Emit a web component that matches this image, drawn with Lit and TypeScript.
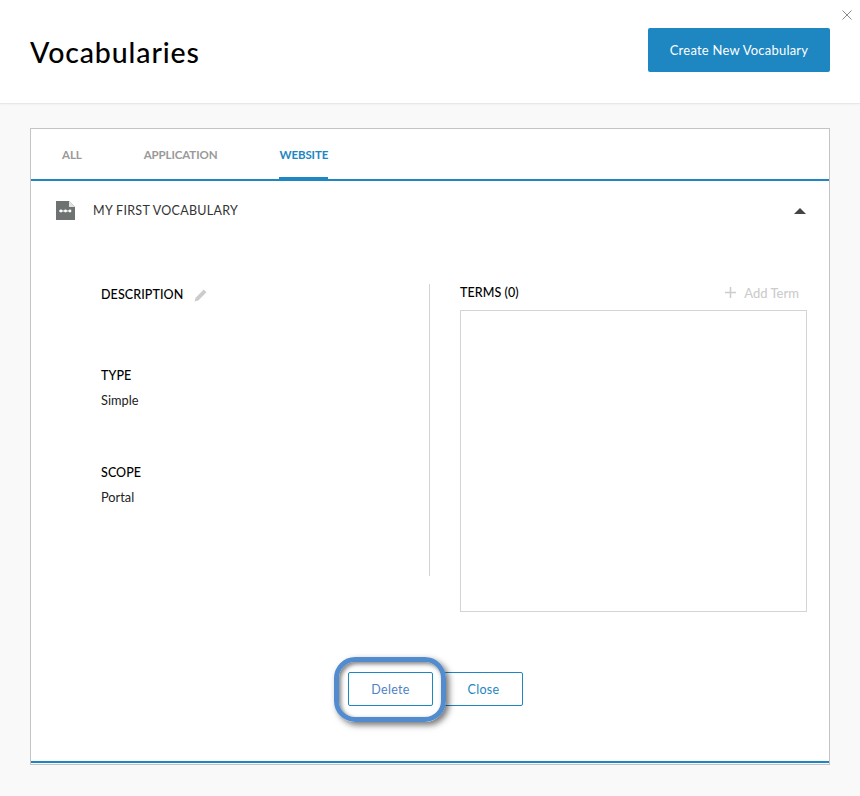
import { LitElement, html, css } from "lit";
import { customElement } from "lit/decorators.js";

@customElement("app-root")
export class AppRoot extends LitElement {
  static styles = css`
    :host { display: block; width: 860px; height: 796px; background: #f9f9f9; font-family: Lato, "Liberation Sans", sans-serif; color: #000; overflow: hidden; }
    * { box-sizing: border-box; }
    .header { position: relative; height: 104px; background: #fff; border-bottom: 1px solid #e8e8e8; box-shadow: 0 1px 2px rgba(0,0,0,.03); display: flex; align-items: flex-start; justify-content: space-between; padding: 28px 30px 0; }
    h1 { margin: 8px 0 0; font-family: Lato, sans-serif; font-weight: 500; font-size: 28.5px; line-height: 32px; letter-spacing: .88px; }
    .create { width: 182px; height: 44px; background: #1e86c1; color: #fff; border: 0; border-radius: 2px; font: 13px/43px Lato, sans-serif; letter-spacing: .22px; padding: 0; }
    .x { position: absolute; right: 7px; top: 9px; width: 12px; height: 12px; }
    .main { padding: 24px 30px 0; }
    .panel { height: 637px; background: #fff; border: 1px solid #c4c4c4; display: flex; flex-direction: column; }
    .tabs { height: 52px; flex: none; border-bottom: 2px solid #1e86c1; display: flex; gap: 62px; padding-left: 31px; font: 700 11.5px/1 Lato, sans-serif; letter-spacing: -.1px; color: #999; }
    .tab { height: 51px; padding-top: 20px; }
    .tab.active { color: #1e86c1; border-bottom: 3px solid #1e86c1; }
    .row { height: 60px; flex: none; display: flex; align-items: center; padding: 0 23px 2px 25px; font: 12.5px Lato, sans-serif; letter-spacing: .3px; color: #333; }
    .doc { width: 19px; height: 19px; margin: 1px 18px 0 0; }
    .chev { margin-top: 2px; }
    .name { flex: 1; }
    .content { display: flex; height: 292px; margin-top: 43px; flex: none; }
    .left { width: 399px; border-right: 1px solid #d4d4d4; padding: 3px 0 0 70px; height: 292px; }
    .label { font: 500 12.5px/16px Lato, sans-serif; letter-spacing: .08px; display: flex; align-items: center; gap: 11px; }
    .val { font: 12.8px/16px Lato, sans-serif; color: #222; margin-top: 8px; }
    .group1 { margin-top: 65px; }
    .group2 { margin-top: 57px; }
    .right { width: 377px; padding-left: 30px; margin-top: -2px; }
    .terms-head { display: flex; justify-content: space-between; align-items: center; height: 22px; padding-right: 8px; }
    .add { display: flex; align-items: center; gap: 8px; color: #ccc; font: 500 13px/16px Lato, sans-serif; margin-top: -1px; }
    .box { width: 347px; height: 302px; margin-top: 6px; border: 1px solid #d4d4d4; }
    .actions { display: flex; justify-content: center; gap: 11px; margin-top: 96px; margin-left: 11px; }
    .btn { position: relative; width: 85px; height: 34px; border: 1px solid #1e86c1; border-radius: 2px; background: #fff; color: #1e86c1; font: 12.5px Lato, sans-serif; letter-spacing: .3px; padding: 0; }
    .btn.close { width: 79px; }
    .btn.del { color: #4f81c4; }
    .hl { position: absolute; left: -15px; top: -16px; width: 112px; height: 65px; border: 5px solid #528ccf; border-radius: 21px; box-shadow: 3px 3px 6px rgba(0,0,0,.55), inset 2px 2px 4px rgba(0,0,0,.5); pointer-events: none; z-index: 1; }
    .spacer { flex: 1; }
    .end { height: 2px; background: #1e86c1; margin-bottom: 1px; flex: none; }
  `;

  render() {
    return html`
      <div class="header">
        <h1>Vocabularies</h1>
        <button class="create">Create New Vocabulary</button>
        <svg class="x" viewBox="0 0 12 12" fill="none" stroke="#8a8a8a" stroke-width="1"><path d="M1.5 1.5l9 9M10.5 1.5l-9 9"/></svg>
      </div>
      <div class="main">
        <div class="panel">
          <div class="tabs">
            <div class="tab">ALL</div>
            <div class="tab">APPLICATION</div>
            <div class="tab active">WEBSITE</div>
          </div>
          <div class="row">
            <svg class="doc" viewBox="0 0 19 19"><path fill="#6f7273" d="M0 0h13l6 6v13H0z"/><path fill="#e2e2e2" d="M13 0l6 6h-6z"/><circle cx="5" cy="10" r="1.4" fill="#fff"/><circle cx="9.5" cy="10" r="1.4" fill="#fff"/><circle cx="14" cy="10" r="1.4" fill="#fff"/><path fill="#fff" d="M3 9.5h12v1H3z"/></svg>
            <span class="name">MY FIRST VOCABULARY</span>
            <svg class="chev" width="12" height="6" viewBox="0 0 12 6"><path fill="#444" d="M6 0l6 6H0z"/></svg>
          </div>
          <div class="content">
            <div class="left">
              <div class="label">DESCRIPTION
                <svg width="13" height="13" viewBox="0 0 12 12"><path fill="#ccc" d="M9 .5L11.5 3 4 10.5.5 11.5 1.5 8z"/></svg>
              </div>
              <div class="group1"><div class="label">TYPE</div><div class="val">Simple</div></div>
              <div class="group2"><div class="label">SCOPE</div><div class="val">Portal</div></div>
            </div>
            <div class="right">
              <div class="terms-head">
                <div class="label">TERMS (0)</div>
                <div class="add"><svg width="11" height="11" viewBox="0 0 11 11" fill="none" stroke="#ccc" stroke-width="1.5"><path d="M5.5 0v11M0 5.5h11"/></svg>Add Term</div>
              </div>
              <div class="box"></div>
            </div>
          </div>
          <div class="actions">
            <button class="btn del">Delete<span class="hl"></span></button>
            <button class="btn close">Close</button>
          </div>
          <div class="spacer"></div>
          <div class="end"></div>
        </div>
      </div>
    `;
  }
}
